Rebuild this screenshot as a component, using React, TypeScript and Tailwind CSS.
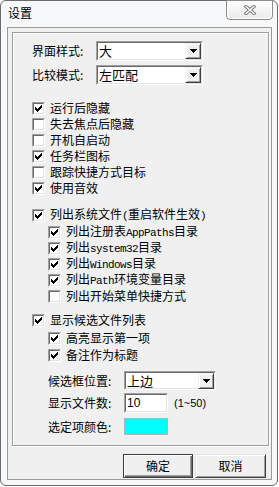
import type { ReactNode } from "react"

const CHECK = ["......X", ".....XX", "X...XXX", "XX.XXX.", "XXXXX..", ".XXX...", "..X...."]

function CheckMark() {
  return (
    <svg width="7" height="7" viewBox="0 0 7 7" shapeRendering="crispEdges">
      {CHECK.flatMap((row, y) =>
        row.split("").map((c, x) => (c === "X" ? <rect key={`${x}-${y}`} x={x} y={y} width="1" height="1" fill="#000" /> : null))
      )}
    </svg>
  )
}

function Sunken({ className, children }: { className: string; children?: ReactNode }) {
  return (
    <div className={`border border-t-[#a0a0a0] border-l-[#a0a0a0] border-b-white border-r-white ${className}`}>
      <div className="h-full w-full border border-t-[#696969] border-l-[#696969] border-b-[#e3e3e3] border-r-[#e3e3e3] bg-white">
        {children}
      </div>
    </div>
  )
}

function Check({ checked, children, sub }: { checked?: boolean; children: ReactNode; sub?: boolean }) {
  return (
    <div className={`flex h-[16px] items-center ${sub ? "pl-[16px]" : ""}`}>
      <div className="h-[13px] w-[13px] border border-t-[#a0a0a0] border-l-[#a0a0a0] border-b-white border-r-white">
        <div className="flex h-full w-full items-center justify-center border border-t-[#696969] border-l-[#696969] border-b-[#e3e3e3] border-r-[#e3e3e3] bg-white">
          {checked && <CheckMark />}
        </div>
      </div>
      <span className="ml-[5px] whitespace-nowrap leading-[16px]">{children}</span>
    </div>
  )
}

function Combo({ value, className }: { value: string; className: string }) {
  return (
    <Sunken className={className}>
      <div className="flex h-full items-center">
        <span className="flex-1 pl-[1px] text-[13px] leading-[16px]">{value}</span>
        <div className="flex h-[16px] w-[16px] items-center justify-center border border-t-[#f0f0f0] border-l-[#f0f0f0] border-b-[#404040] border-r-[#404040] bg-[#f0f0f0] shadow-[inset_1px_1px_0_#fff,inset_-1px_-1px_0_#a0a0a0]">
          <svg width="7" height="4" viewBox="0 0 7 4" shapeRendering="crispEdges">
            <path d="M0 0h7v1H0zM1 1h5v1H1zM2 2h3v1H2zM3 3h1v1H3z" fill="#000" />
          </svg>
        </div>
      </div>
    </Sunken>
  )
}

function Mono({ children }: { children: string }) {
  return <span className="font-['Liberation_Mono',monospace] text-[11px] tracking-[-0.6px]">{children}</span>
}

export default function App() {
  return (
    <div className="h-[487px] w-[279px] bg-white font-['Noto_Sans_CJK_SC',sans-serif] text-[12px] text-black">
      <div className="h-[486px] w-[278px] rounded-[6px] border border-[#6b6b6b] bg-[#f7f8fa]">
        <div className="relative h-[26px]">
          <span className="absolute left-[7px] top-[4px] leading-[16px]">设置</span>
          <div className="absolute right-[4px] top-[-1px] flex h-[20px] w-[47px] items-center justify-center rounded-b-[4px] border border-[#8c8c8c] bg-gradient-to-b from-white to-[#ebebeb] shadow-[inset_0_0_0_1px_#fff]">
            <svg width="12" height="10" viewBox="0 0 12 10">
              <path d="M2 1.5l8 7M10 1.5l-8 7" stroke="#7a7a7a" strokeWidth="3.4" strokeLinecap="square" />
              <path d="M2 1.5l8 7M10 1.5l-8 7" stroke="#fff" strokeWidth="1.4" strokeLinecap="square" />
            </svg>
          </div>
        </div>

        <div className="ml-[6px] h-[453px] w-[265px] border border-[#9a9a9a] bg-[#f0f0f0] pl-[4px] pt-[4px]">
          <div className="h-[414px] w-[257px] border border-[#a0a0a0] pl-[19px] shadow-[inset_1px_1px_0_#fff,1px_1px_0_#fff]">
            <div className="mt-[8px] flex items-center">
              <span className="w-[64px] leading-[16px]">界面样式:</span>
              <Combo value="大" className="h-[20px] w-[107px]" />
            </div>
            <div className="mt-[4px] flex items-center">
              <span className="w-[64px] leading-[16px]">比较模式:</span>
              <Combo value="左匹配" className="h-[20px] w-[107px]" />
            </div>

            <div className="mt-[15px]">
              <Check checked>运行后隐藏</Check>
              <Check>失去焦点后隐藏</Check>
              <Check>开机自启动</Check>
              <Check checked>任务栏图标</Check>
              <Check>跟踪快捷方式目标</Check>
              <Check checked>使用音效</Check>
            </div>

            <div className="mt-[11px]">
              <Check checked>列出系统文件<Mono>(</Mono>重启软件生效<Mono>)</Mono></Check>
            </div>
            <div className="mt-[1px]">
              <Check checked sub>列出注册表<Mono>AppPaths</Mono>目录</Check>
              <Check checked sub>列出<Mono>system32</Mono>目录</Check>
              <Check checked sub>列出<Mono>Windows</Mono>目录</Check>
              <Check checked sub>列出<Mono>Path</Mono>环境变量目录</Check>
              <Check sub>列出开始菜单快捷方式</Check>
            </div>

            <div className="mt-[8px]">
              <Check checked>显示候选文件列表</Check>
            </div>
            <div className="mt-[2px] flex flex-col gap-[1px]">
              <Check checked sub>高亮显示第一项</Check>
              <Check checked sub>备注作为标题</Check>
            </div>

            <div className="mt-[8px] flex items-center pl-[16px]">
              <span className="w-[76px] leading-[16px]">候选框位置:</span>
              <Combo value="上边" className="h-[19px] w-[92px]" />
            </div>
            <div className="mt-[3px] flex items-center pl-[16px]">
              <span className="w-[76px] leading-[16px]">显示文件数:</span>
              <Sunken className="h-[20px] w-[44px]">
                <span className="block pl-[1px] font-['Liberation_Sans',sans-serif] text-[12px] leading-[16px]">10</span>
              </Sunken>
              <span className="ml-[6px] font-['Liberation_Sans',sans-serif] text-[11px] leading-[16px]">(1~50)</span>
            </div>
            <div className="mt-[5px] flex items-center pl-[16px]">
              <span className="w-[76px] leading-[16px]">选定项颜色:</span>
              <div className="h-[17px] w-[44px] border border-[#b4b4b4] bg-[#00ffff]" />
            </div>
          </div>

          <div className="ml-[111px] mt-[8px] flex gap-[2px]">
            <button className="h-[24px] w-[70px] border border-[#3c3c3c] bg-[#f0f0f0] leading-[16px] shadow-[inset_1px_1px_0_#fff,inset_-1px_-1px_0_#696969,inset_-2px_-2px_0_#a0a0a0]">
              确定
            </button>
            <button className="h-[24px] w-[71px] border border-t-[#e3e3e3] border-l-[#e3e3e3] border-b-[#404040] border-r-[#404040] bg-[#f0f0f0] leading-[16px] shadow-[inset_1px_1px_0_#fff,inset_-1px_-1px_0_#a0a0a0]">
              取消
            </button>
          </div>
        </div>
      </div>
    </div>
  )
}
